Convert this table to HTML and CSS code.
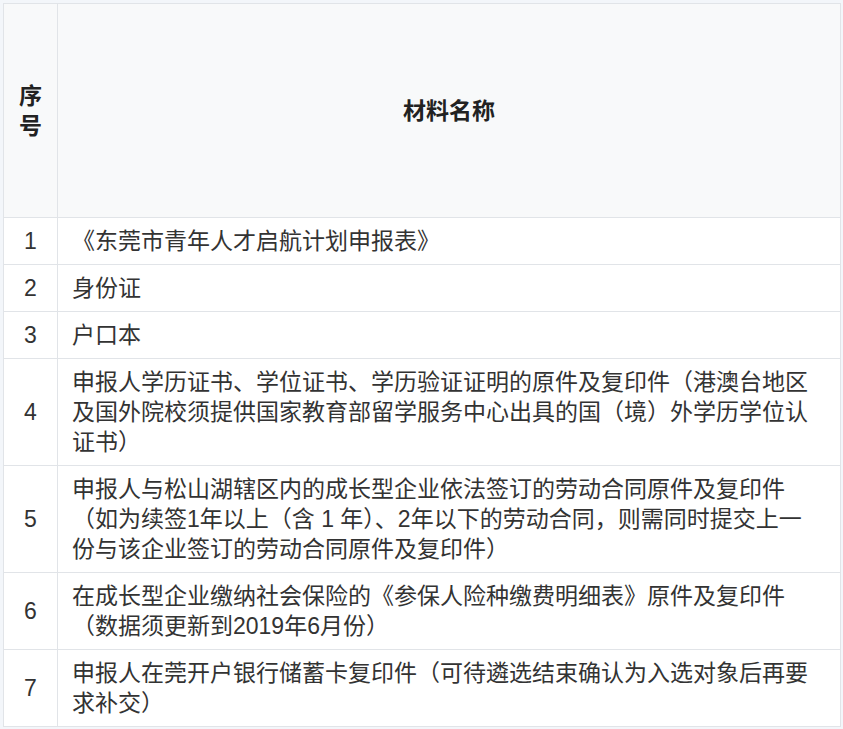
FILE: index.html
```html
<!DOCTYPE html>
<html lang="zh-CN">
<head>
    <meta charset="UTF-8">
    <title>材料清单</title>
    <link rel="stylesheet" href="styles.css">
</head>
<body>
    <table class="list">
        <colgroup>
            <col class="col-no">
            <col>
        </colgroup>
        <thead>
            <tr>
                <th>序号</th>
                <th>材料名称</th>
            </tr>
        </thead>
        <tbody>
            <tr>
                <td class="no">1</td>
                <td>《东莞市青年人才启航计划申报表》</td>
            </tr>
            <tr>
                <td class="no">2</td>
                <td>身份证</td>
            </tr>
            <tr>
                <td class="no">3</td>
                <td>户口本</td>
            </tr>
            <tr>
                <td class="no">4</td>
                <td>申报人学历证书、学位证书、学历验证证明的原件及复印件（港澳台地区及国外院校须提供国家教育部留学服务中心出具的国（境）外学历学位认证书）</td>
            </tr>
            <tr>
                <td class="no">5</td>
                <td>申报人与松山湖辖区内的成长型企业依法签订的劳动合同原件及复印件（如为续签1年以上（含 1 年）、2年以下的劳动合同，则需同时提交上一份与该企业签订的劳动合同原件及复印件）</td>
            </tr>
            <tr>
                <td class="no">6</td>
                <td>在成长型企业缴纳社会保险的《参保人险种缴费明细表》原件及复印件（数据须更新到2019年6月份）</td>
            </tr>
            <tr>
                <td class="no">7</td>
                <td>申报人在莞开户银行储蓄卡复印件（可待遴选结束确认为入选对象后再要求补交）</td>
            </tr>
        </tbody>
    </table>
</body>
</html>
```

FILE: styles.css
```css
*{
    margin:0;
    padding:0;
    box-sizing:border-box;
}
body{
    background:#f3f6fa;
    padding:3px 2px 0 3px;
    font-family:"Liberation Sans","Noto Sans CJK SC",sans-serif;
    color:#333;
}
.list{
    width:838px;
    border-collapse:collapse;
    table-layout:fixed;
    background:#fff;
    font-size:23px;
    line-height:30px;
}
.col-no{
    width:54px;
}
.list th,
.list td{
    border:1px solid #e1e4e8;
    padding:8px 26px 8px 14px;
    vertical-align:middle;
}
.list th{
    height:214px;
    background:#f8f9fa;
    font-weight:bold;
    text-align:center;
    color:#222;
    padding:8px 14px;
}
.list td{
    text-align:left;
}
.list td.no{
    text-align:center;
    padding:8px 0;
}
```
